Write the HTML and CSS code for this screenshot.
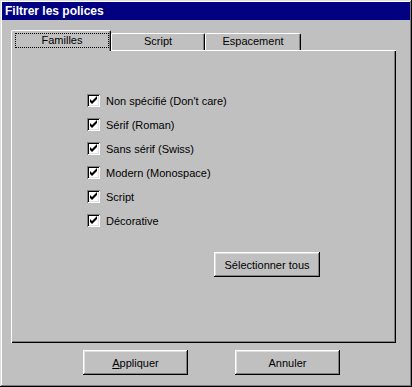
FILE: index.html
```html
<!DOCTYPE html>
<html lang="fr">
<head>
  <meta charset="UTF-8">
  <title>Filtrer les polices</title>
  <link rel="stylesheet" href="styles.css">
</head>
<body>
<div class="window">
  <div class="titlebar">Filtrer les polices</div>
  <div class="content">
    <div class="tabs">
      <div class="tab active"><span class="focus">Familles</span></div>
      <div class="tab tab-script">Script</div>
      <div class="tab tab-space">Espacement</div>
    </div>
    <div class="panel">
      <ul class="checks">
        <li><span class="box"><svg width="13" height="13" viewBox="0 0 13 13"><polygon points="3,5 5,7 10,2 10,5 5,10 3,8" fill="#000"/></svg></span>Non spécifié (Don't care)</li>
        <li><span class="box"><svg width="13" height="13" viewBox="0 0 13 13"><polygon points="3,5 5,7 10,2 10,5 5,10 3,8" fill="#000"/></svg></span>Sérif (Roman)</li>
        <li><span class="box"><svg width="13" height="13" viewBox="0 0 13 13"><polygon points="3,5 5,7 10,2 10,5 5,10 3,8" fill="#000"/></svg></span>Sans sérif (Swiss)</li>
        <li><span class="box"><svg width="13" height="13" viewBox="0 0 13 13"><polygon points="3,5 5,7 10,2 10,5 5,10 3,8" fill="#000"/></svg></span>Modern (Monospace)</li>
        <li><span class="box"><svg width="13" height="13" viewBox="0 0 13 13"><polygon points="3,5 5,7 10,2 10,5 5,10 3,8" fill="#000"/></svg></span>Script</li>
        <li><span class="box"><svg width="13" height="13" viewBox="0 0 13 13"><polygon points="3,5 5,7 10,2 10,5 5,10 3,8" fill="#000"/></svg></span>Décorative</li>
      </ul>
      <button type="button" class="btn select-all">Sélectionner tous</button>
    </div>
    <div class="actions">
      <button type="button" class="btn"><u>A</u>ppliquer</button>
      <button type="button" class="btn">Annuler</button>
    </div>
  </div>
</div>
</body>
</html>
```

FILE: styles.css
```css
body {
  margin: 0;
  font-family: "Liberation Sans", Arial, sans-serif;
  font-size: 11px;
  color: #000;
}
.window {
  width: 412px;
  height: 387px;
  box-sizing: border-box;
  padding: 2px;
  background: #c0c0c0;
  box-shadow: inset -1px -1px #000, inset 1px 1px #dfdfdf, inset -2px -2px #808080, inset 2px 2px #fff;
}
.titlebar {
  height: 18px;
  line-height: 18px;
  padding-left: 3px;
  background: #000080;
  color: #fff;
  font-weight: bold;
  font-size: 12px;
}
.content { padding: 10px 0 0 9px; }

/* onglets */
.tabs {
  display: flex;
  align-items: flex-end;
  height: 20px;
}
.tab {
  box-sizing: border-box;
  height: 17px;
  border-top: 1px solid #fff;
  border-left: 1px solid #fff;
  border-right: 1px solid #000;
  border-radius: 2px 2px 0 0;
  box-shadow: inset -1px 0 #808080;
  text-align: center;
  line-height: 15px;
}
.tab-script { width: 94px; }
.tab-space { width: 96px; }
.tab.active {
  position: relative;
  z-index: 1;
  width: 100px;
  height: 21px;
  margin-bottom: -1px;
  background: #c0c0c0;
}
.focus {
  display: block;
  height: 15px;
  box-sizing: border-box;
  margin: 2px 1px 0 3px;
  border: 1px dotted #000;
  line-height: 13px;
}

.panel {
  width: 385px;
  height: 293px;
  box-sizing: border-box;
  padding: 44px 0 0 76px;
  box-shadow: inset 1px 1px #fff, inset -1px -1px #000, inset -2px -2px #808080;
}
.checks {
  list-style: none;
  margin: 0;
  padding: 0;
  display: flex;
  flex-direction: column;
  gap: 11px;
}
.checks li {
  display: flex;
  align-items: center;
  gap: 6px;
  height: 13px;
}
.box {
  width: 13px;
  height: 13px;
  background: #fff;
  box-shadow: inset 1px 1px #808080, inset -1px -1px #fff, inset 2px 2px #000, inset -2px -2px #dfdfdf;
}
.box svg { display: block; }

.btn {
  font: inherit;
  color: #000;
  background: #c0c0c0;
  border: none;
  padding: 0;
  width: 105px;
  height: 25px;
  box-shadow: inset -1px -1px #000, inset 1px 1px #fff, inset -2px -2px #808080, inset 2px 2px #dfdfdf;
}
.select-all {
  display: block;
  margin: 25px 0 0 127px;
  width: 106px;
}
.actions {
  display: flex;
  gap: 47px;
  margin-top: 7px;
  padding-left: 72px;
}
```
